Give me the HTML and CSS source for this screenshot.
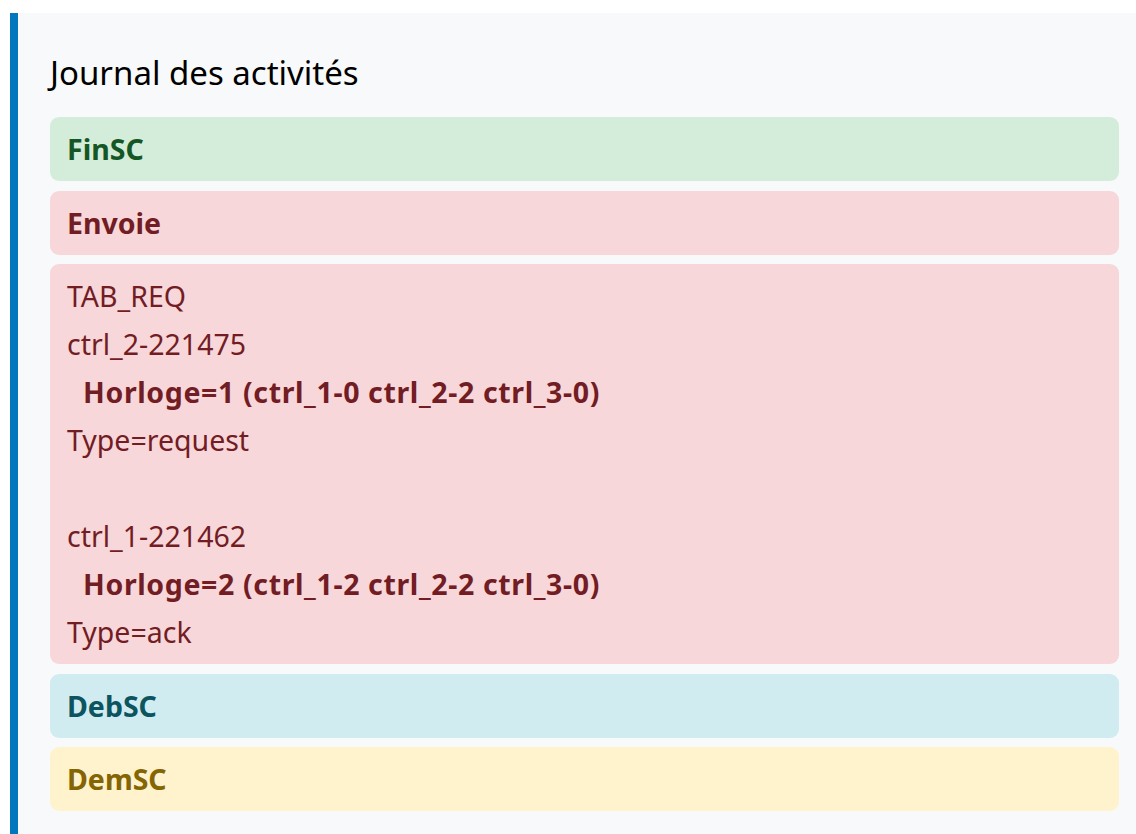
FILE: index.html
```html
<!DOCTYPE html>
<html lang="fr">
<head>
<meta charset="utf-8">
<title>Journal des activités</title>
<link rel="stylesheet" href="styles.css">
</head>
<body>
<div class="page">
  <section class="panel">
    <h2 class="panel-title">Journal des activités</h2>
    <div class="log">
      <div class="alert alert-success"><strong>FinSC</strong></div>
      <div class="alert alert-danger"><strong>Envoie</strong></div>
      <div class="alert alert-danger">
        <div class="line">TAB_REQ</div>
        <div class="line">ctrl_2-221475</div>
        <div class="line clock"><strong>Horloge=1 (ctrl_1-0 ctrl_2-2 ctrl_3-0)</strong></div>
        <div class="line">Type=request</div>
        <div class="line empty">&nbsp;</div>
        <div class="line">ctrl_1-221462</div>
        <div class="line clock"><strong>Horloge=2 (ctrl_1-2 ctrl_2-2 ctrl_3-0)</strong></div>
        <div class="line">Type=ack</div>
      </div>
      <div class="alert alert-info"><strong>DebSC</strong></div>
      <div class="alert alert-warning"><strong>DemSC</strong></div>
    </div>
  </section>
</div>
</body>
</html>
```

FILE: styles.css
```css
html, body {
  margin: 0;
  padding: 0;
  background: #ffffff;
}

body {
  font-family: "Noto Sans", "Open Sans", "DejaVu Sans", sans-serif;
  color: #000;
}

.page {
  padding: 13px 0 0 10px;
  min-height: 821px;
  box-sizing: border-box;
}

.panel {
  background: #f8f9fa;
  border-left: 8px solid #0277bd;
  padding: 40px 17px 24px 32px;
  min-height: 821px;
  box-sizing: border-box;
}

.panel-title {
  margin: 0 0 24px 0;
  font-size: 33px;
  font-weight: 400;
  line-height: 40px;
}

.log {
  display: flex;
  flex-direction: column;
  gap: 9.5px;
}

.alert {
  border-radius: 9px;
  padding: 8px 17px;
  font-size: 28.5px;
  line-height: 48px;
}

.alert strong {
  font-weight: 700;
}

.clock {
  padding-left: 16px;
}

.clock strong {
  letter-spacing: 0.63px;
}

.alert-success { background: #d4edda; color: #155724; }
.alert-danger  { background: #f8d7da; color: #721c24; }
.alert-info    { background: #d1ecf1; color: #0c5460; }
.alert-warning { background: #fff3cd; color: #856404; }
```
